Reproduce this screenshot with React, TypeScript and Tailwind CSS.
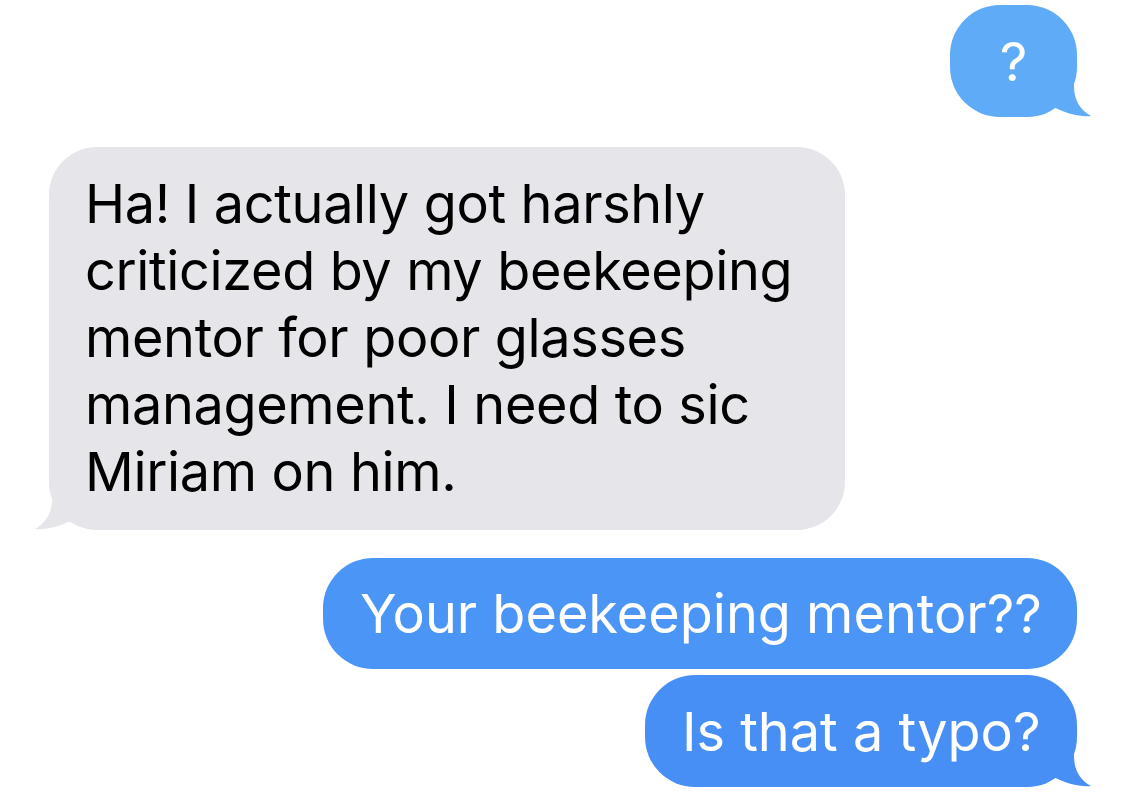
import React from "react";

const TailRight = ({ color }: { color: string }) => (
  <svg
    className="absolute -right-[17px] bottom-0"
    width="50"
    height="51"
    viewBox="0 0 50 51"
    fill={color}
  >
    <path d="M30 0 L30 20 C30 34 36 44 47 50 C36 51 22 48 8 40 L0 0 Z" />
  </svg>
);

const TailLeft = ({ color }: { color: string }) => (
  <svg
    className="absolute -left-[17px] bottom-0"
    width="50"
    height="51"
    viewBox="0 0 50 51"
    fill={color}
  >
    <path d="M20 0 L20 20 C20 34 14 44 3 50 C14 51 28 48 42 40 L50 0 Z" />
  </svg>
);

const App = () => {
  return (
    <div
      className="w-[1125px] h-[796px] bg-white overflow-hidden flex flex-col px-[48px] pt-[5px] text-[54px] leading-[67px]"
      style={{ fontFamily: "Inter, 'Noto Sans', sans-serif" }}
    >
      <div className="self-end relative">
        <div className="bg-[#5fabf8] text-white rounded-[50px] w-[127px] h-[112px] flex items-center justify-center">
          ?
        </div>
        <TailRight color="#5fabf8" />
      </div>

      <div className="self-start relative mt-[30px] ml-px">
        <div className="bg-[#e5e5ea] text-black rounded-[48px] w-[796px] pl-[36px] pr-[38px] pt-[23px] pb-[25px] tracking-[-0.35px]">
          Ha! I actually got harshly
          <br />
          criticized by my beekeeping
          <br />
          mentor for poor glasses
          <br />
          management. I need to sic
          <br />
          Miriam on him.
        </div>
        <TailLeft color="#e5e5ea" />
      </div>

      <div className="self-end mt-[28px]">
        <div className="bg-[#4b95f6] text-white rounded-[50px] w-[754px] h-[111px] pl-[37px] flex items-center whitespace-nowrap tracking-[0px]">
          Your beekeeping mentor??
        </div>
      </div>

      <div className="self-end relative mt-[6px]">
        <div className="bg-[#488ff5] text-white rounded-[50px] w-[432px] h-[112px] pl-[37px] flex items-center whitespace-nowrap tracking-[0px]">
          Is that a typo?
        </div>
        <TailRight color="#488ff5" />
      </div>
    </div>
  );
};

export default App;
